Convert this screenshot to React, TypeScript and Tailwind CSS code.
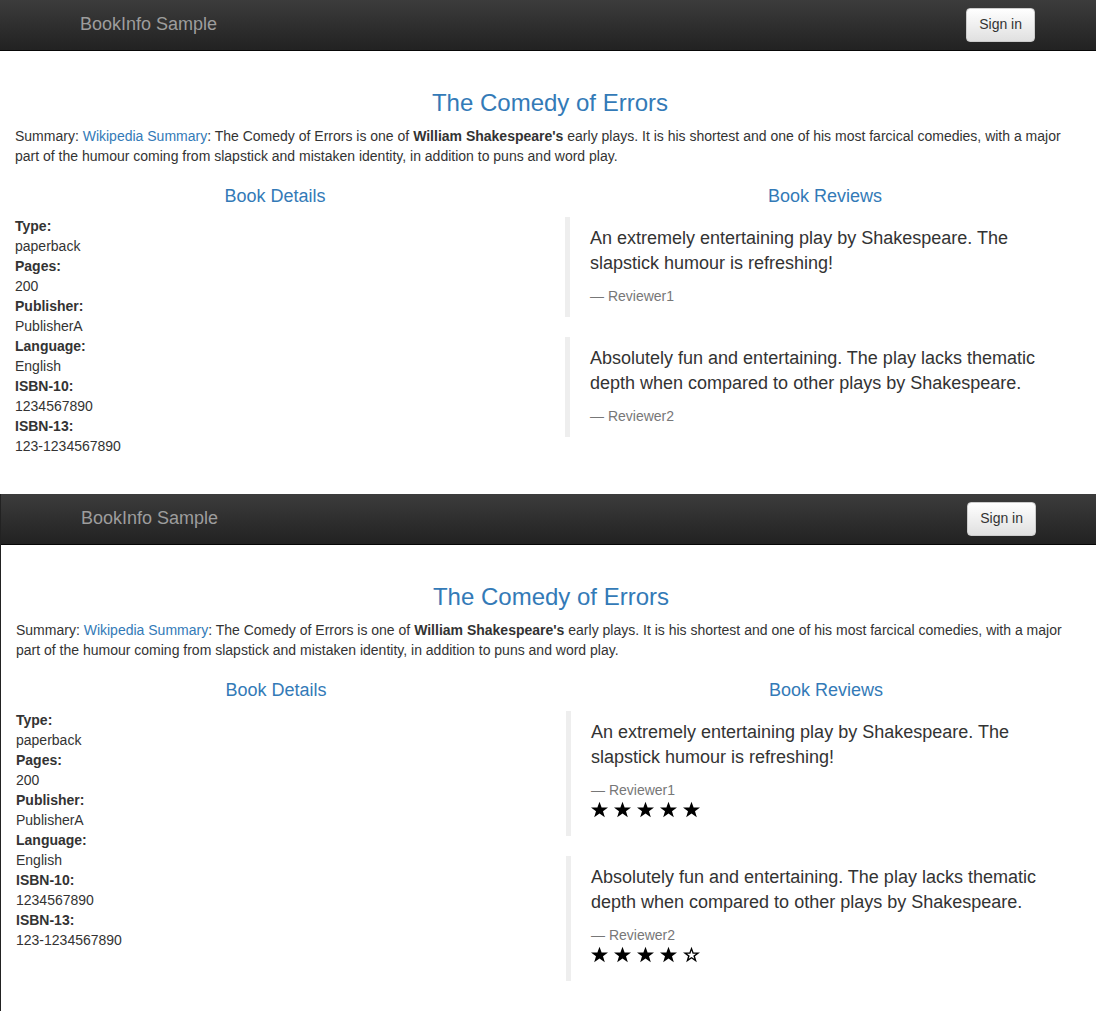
import React from "react";

type Review = { text: string; reviewer: string; stars: number };

const reviews: Review[] = [
  { text: "An extremely entertaining play by Shakespeare. The slapstick humour is refreshing!", reviewer: "Reviewer1", stars: 5 },
  { text: "Absolutely fun and entertaining. The play lacks thematic depth when compared to other plays by Shakespeare.", reviewer: "Reviewer2", stars: 4 },
];

const details = [
  ["Type:", "paperback"],
  ["Pages:", "200"],
  ["Publisher:", "PublisherA"],
  ["Language:", "English"],
  ["ISBN-10:", "1234567890"],
  ["ISBN-13:", "123-1234567890"],
];

const STAR = "M8.5 0.8L10.6 6.4H17L12 10.2L13.8 16.2L8.5 12.6L3.2 16.2L5 10.2L0 6.4H6.4Z";
const STAR_HOLE = "M8.5 4.6L9.6 7.8H13L10.3 9.8L11.3 12.8L8.5 10.9L5.7 12.8L6.7 9.8L4 7.8H7.4Z";

function Star({ filled }: { filled: boolean }) {
  return (
    <svg width="17" height="17" viewBox="0 0 17 17" aria-hidden="true">
      <path d={filled ? STAR : STAR + STAR_HOLE} fill="#000" fillRule="evenodd" />
    </svg>
  );
}

function Stars({ count }: { count: number }) {
  return (
    <div className="flex h-[25px] gap-[6px] pt-px" role="img" aria-label={`${count} of 5 stars`}>
      {[1, 2, 3, 4, 5].map((n) => (
        <Star key={n} filled={n <= count} />
      ))}
    </div>
  );
}

function ProductPage({ rated }: { rated: boolean }) {
  return (
    <section>
      <header className="h-[51px] border-b border-[#080808] bg-linear-to-b from-[#3c3c3c] to-[#222222]">
        <div className="flex items-start justify-between pr-[61px] pl-20">
          <a href="#" className="py-[14px] text-[18px] leading-5 text-[#9d9d9d]">BookInfo Sample</a>
          <button type="button" className="mt-2 rounded border border-[#cccccc] bg-linear-to-b from-white to-[#e0e0e0] px-3 pt-[5px] pb-[7px] leading-5 text-[#333333]">
            Sign in
          </button>
        </div>
      </header>
      <main className="pt-[39px] pr-[11px] pl-[15px]">
        <h3 className="mb-2.5 text-center text-[24px] leading-[26px] text-[#337ab7]">The Comedy of Errors</h3>
        <p>
          Summary: <a href="#" className="text-[#337ab7]">Wikipedia Summary</a>: The Comedy of Errors is one of{" "}
          <b>William Shakespeare's</b> early plays. It is his shortest and one of his most farcical comedies, with a major
          part of the humour coming from slapstick and mistaken identity, in addition to puns and word play.
        </p>
        <div className="mt-5 grid grid-cols-2 gap-x-[30px]">
          <div>
            <h4 className="mb-2.5 text-center text-[18px] leading-5 text-[#337ab7]">Book Details</h4>
            <dl>
              {details.map(([term, value]) => (
                <React.Fragment key={term}>
                  <dt className="font-bold">{term}</dt>
                  <dd>{value}</dd>
                </React.Fragment>
              ))}
            </dl>
          </div>
          <div>
            <h4 className="mb-[11px] text-center text-[18px] leading-5 text-[#337ab7]">Book Reviews</h4>
            {reviews.map((r) => (
              <blockquote key={r.reviewer} className="mb-5 border-l-[5px] border-[#eeeeee] px-5 pt-[9px] pb-[11px]">
                <p className="mb-2.5 text-[18px] leading-[25px]">{r.text}</p>
                <footer className="leading-5 text-[#777777]">— <cite className="not-italic">{r.reviewer}</cite></footer>
                {rated && <Stars count={r.stars} />}
              </blockquote>
            ))}
          </div>
        </div>
      </main>
    </section>
  );
}

export default function App() {
  return (
    <div className="overflow-x-hidden bg-white font-['Liberation_Sans',Arial,sans-serif] text-[14px] leading-5 text-[#333333]">
      <div className="pb-[37px]">
        <ProductPage rated={false} />
      </div>
      <div className="-mr-px border-l border-[#222222] pb-[10px]">
        <ProductPage rated />
      </div>
    </div>
  );
}
